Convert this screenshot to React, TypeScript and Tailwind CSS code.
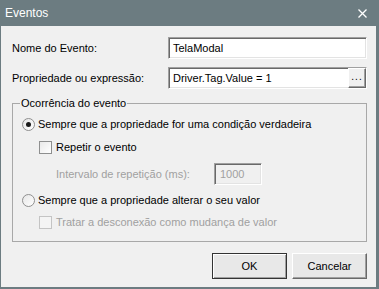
import { type ReactNode } from "react";

const font = "font-['Liberation_Sans',Arial,sans-serif] text-[11px]";

const sunken =
	"border border-t-[#a0a0a0] border-l-[#a0a0a0] border-r-white border-b-white shadow-[inset_1px_1px_0_#696969,inset_-1px_-1px_0_#e3e3e3]";

function Radio({ checked }: { checked?: boolean }) {
	return (
		<span className="w-[13px] h-[13px] rounded-full border border-[#8f8f8f] bg-gradient-to-br from-[#e6e6e6] to-white flex items-center justify-center shrink-0">
			{checked && <span className="w-[5px] h-[5px] rounded-full bg-[#1a1a1a]" />}
		</span>
	);
}

function Checkbox({ disabled }: { disabled?: boolean }) {
	return (
		<span
			className={
				disabled
					? "w-[13px] h-[13px] border border-[#c4c4c4] bg-[#f4f4f4] shrink-0"
					: "w-[13px] h-[13px] border border-[#8e8f8f] bg-gradient-to-br from-[#e9e9e9] to-white shrink-0"
			}
		/>
	);
}

function Row({ children, className }: { children: ReactNode; className?: string }) {
	return <div className={"flex items-center h-[16px] " + (className ?? "")}>{children}</div>;
}

export default function App() {
	return (
		<div className={"w-[379px] h-[289px] flex flex-col bg-[#6c7c81] text-black " + font}>
			{/* barra de título */}
			<div className="h-[26px] flex items-center justify-between pl-[5px] pr-[12px] shrink-0">
				<span className="text-white text-[12px]">Eventos</span>
				<svg width="9" height="9" viewBox="0 0 9 9">
					<path d="M0.5 0.5 L8.5 8.5 M8.5 0.5 L0.5 8.5" stroke="white" strokeWidth="1.3" />
				</svg>
			</div>

			<div className="flex-1 bg-[#f0f0f0] ml-[1px] mr-[3px] mb-[2px] pl-[11px] pr-[9px] pt-[11px] flex flex-col">
				<div className="flex items-center justify-between">
					<span>Nome do Evento:</span>
					<div className={"w-[199px] h-[22px] bg-white flex items-center pl-[4px] " + sunken}>TelaModal</div>
				</div>

				<div className="flex items-center justify-between mt-[8px]">
					<span>Propriedade ou expressão:</span>
					<div className={"w-[199px] h-[22px] bg-white flex items-center pl-[4px] " + sunken}>
						<span className="flex-1">Driver.Tag.Value = 1</span>
						<button className="w-[18px] h-[20px] bg-[#f0f0f0] border border-t-white border-l-white border-r-[#696969] border-b-[#696969] shadow-[inset_-1px_-1px_0_#a0a0a0] flex items-end justify-center pb-[5px] text-[10px] leading-none tracking-[1px]">
							...
						</button>
					</div>
				</div>

				<fieldset className="mt-[6px] border border-[#a8a8a8] pl-[7px] pr-[7px] pb-[11px] flex flex-col">
					<legend className="px-[1px] leading-[16px]">Ocorrência do evento</legend>

					<Row className="mt-[5px] ml-[2px] gap-[3px]">
						<Radio checked />
						<span>Sempre que a propriedade for uma condição verdadeira</span>
					</Row>

					<Row className="mt-[7px] ml-[19px] gap-[4px]">
						<Checkbox />
						<span>Repetir o evento</span>
					</Row>

					<div className="mt-[8px] ml-[36px] flex items-center h-[22px] text-[#a0a0a0]">
						<span className="w-[158px]">Intervalo de repetição (ms):</span>
						<div className={"w-[48px] h-[22px] bg-[#f0f0f0] flex items-center pl-[5px] " + sunken}>1000</div>
					</div>

					<Row className="mt-[7px] ml-[2px] gap-[3px]">
						<Radio />
						<span>Sempre que a propriedade alterar o seu valor</span>
					</Row>

					<Row className="mt-[6px] ml-[19px] gap-[4px] text-[#a0a0a0]">
						<Checkbox disabled />
						<span>Tratar a desconexão como mudança de valor</span>
					</Row>
				</fieldset>

				<div className="mt-[11px] flex justify-end gap-[5px]">
					<button className="w-[75px] h-[26px] bg-[#e8e8e8] border border-[#333] shadow-[inset_1px_1px_0_white,inset_-1px_-1px_0_#a0a0a0]">
						OK
					</button>
					<button className="w-[75px] h-[26px] bg-[#e8e8e8] border border-t-white border-l-white border-r-[#696969] border-b-[#696969] shadow-[inset_-1px_-1px_0_#a0a0a0]">
						Cancelar
					</button>
				</div>
			</div>
		</div>
	);
}
